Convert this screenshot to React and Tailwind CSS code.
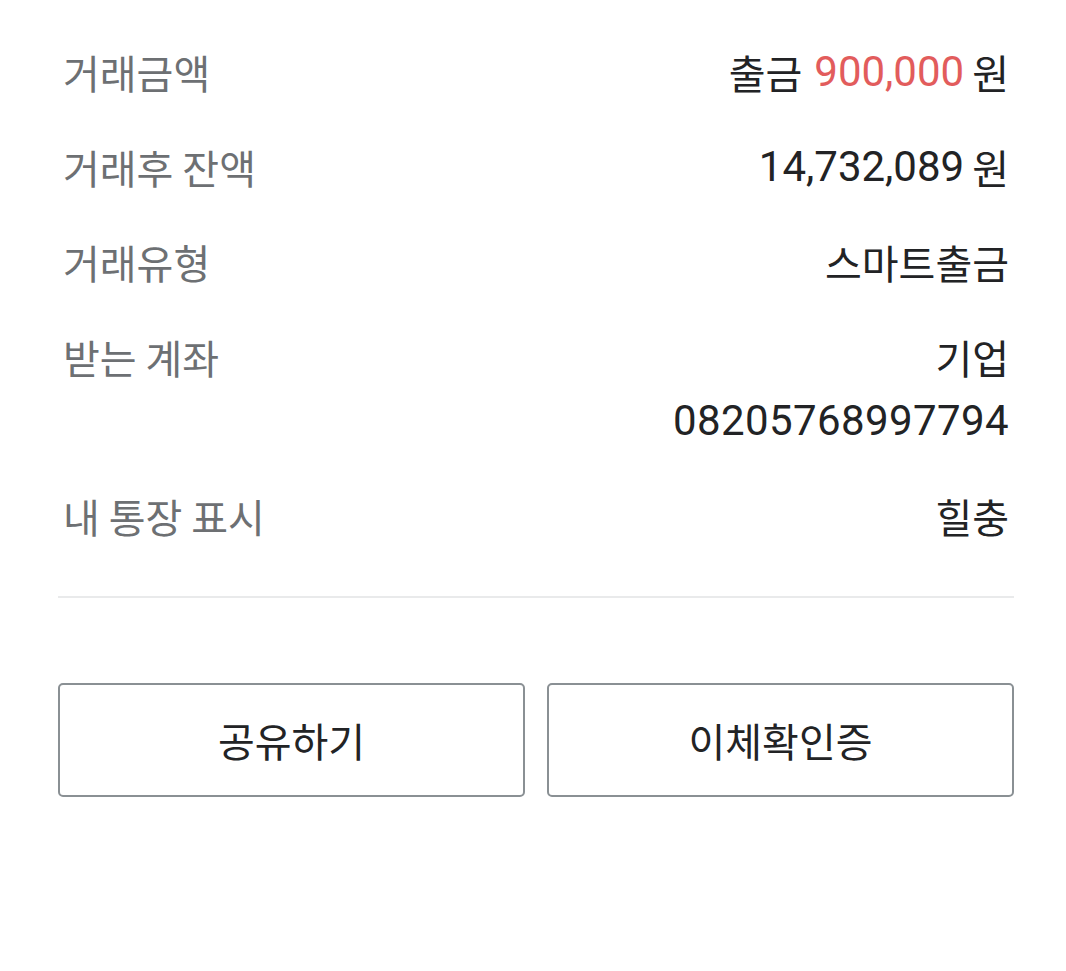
import React from 'react';

const kr = "font-['Noto_Sans_CJK_KR','Noto_Sans',sans-serif] text-[40px]";
const num = "font-['Roboto','Noto_Sans_CJK_KR',sans-serif] text-[42px]";

function Row({ label, children }) {
  return (
    <div className="flex justify-between items-start px-[5px]">
      <span className={`${kr} leading-[64px] text-[#6d7073]`}>{label}</span>
      <div className="flex flex-col items-end text-[#222325]">{children}</div>
    </div>
  );
}

function Line({ children }) {
  return <div className="flex items-center h-[64px] gap-[8px] whitespace-nowrap">{children}</div>;
}

export default function App() {
  return (
    <div className="w-[1066px] h-[971px] bg-white pl-[58px] pr-[52px] pt-[40px]">
      <div className="flex flex-col gap-[31px]">
        <Row label="거래금액">
          <Line>
            <span className={`${kr} leading-[64px] mr-[4px]`}>출금</span>
            <span className={`${num} leading-[64px] text-[#e25c5c]`}>900,000</span>
            <span className={`${kr} leading-[64px]`}>원</span>
          </Line>
        </Row>
        <Row label="거래후 잔액">
          <Line>
            <span className={`${num} leading-[64px]`}>14,732,089</span>
            <span className={`${kr} leading-[64px]`}>원</span>
          </Line>
        </Row>
        <Row label="거래유형">
          <Line>
            <span className={`${kr} leading-[64px]`}>스마트출금</span>
          </Line>
        </Row>
        <Row label="받는 계좌">
          <Line>
            <span className={`${kr} leading-[64px]`}>기업</span>
          </Line>
          <Line>
            <span className={`${num} leading-[64px] tracking-[0.4px]`}>08205768997794</span>
          </Line>
        </Row>
        <Row label="내 통장 표시">
          <Line>
            <span className={`${kr} leading-[64px]`}>힐충</span>
          </Line>
        </Row>
      </div>
      <div className="mt-[48px] h-[2px] bg-[#e9eaeb]" />
      <div className="mt-[85px] grid grid-cols-2 gap-[22px]">
        <button className={`${kr} h-[114px] rounded-[5px] border-2 border-[#8a9094] bg-white text-[#222325]`}>공유하기</button>
        <button className={`${kr} h-[114px] rounded-[5px] border-2 border-[#8a9094] bg-white text-[#222325]`}>이체확인증</button>
      </div>
    </div>
  );
}
